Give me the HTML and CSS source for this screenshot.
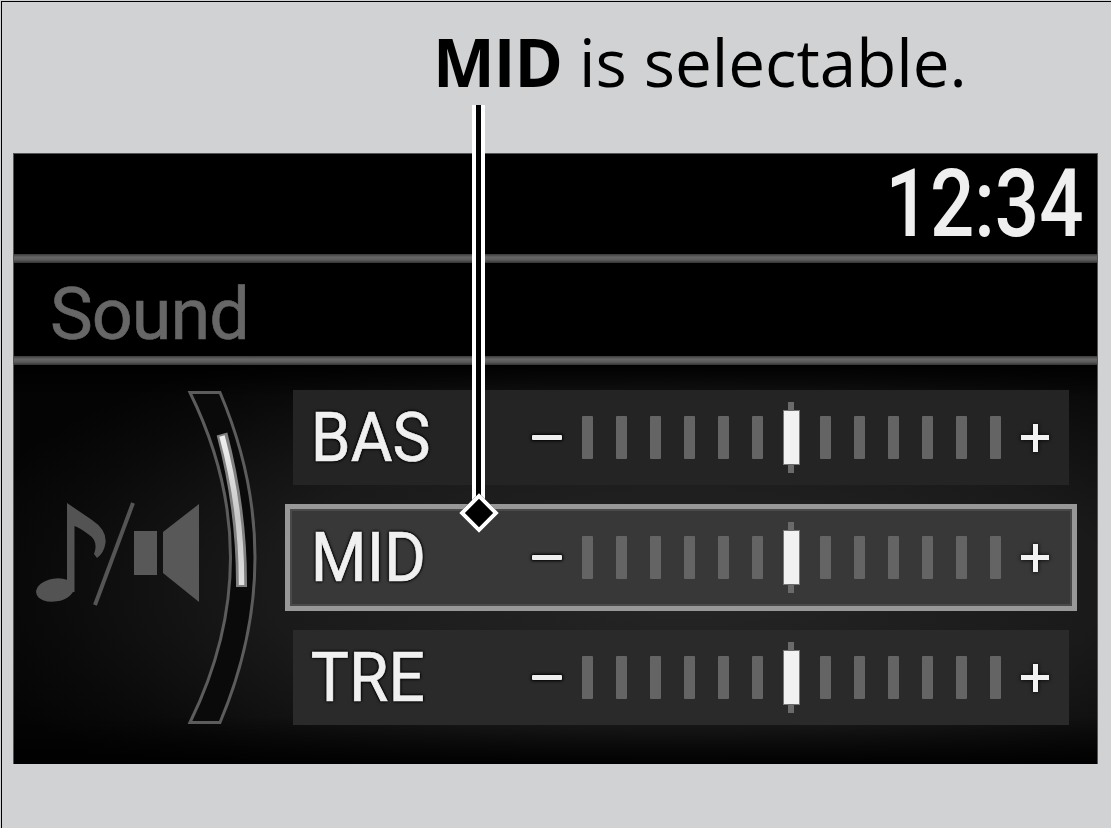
FILE: index.html
```html
<!DOCTYPE html>
<html lang="en">
<head>
<meta charset="utf-8">
<title>MID is selectable</title>
<link rel="stylesheet" href="styles.css">
</head>
<body>
<main class="page">
  <h1 class="title"><b>MID</b> is selectable.</h1>
  <section class="screen">
    <header class="clock-bar"><span class="clock">12:34</span></header>
    <div class="rule"></div>
    <div class="heading-bar"><span class="heading">Sound</span></div>
    <div class="rule"></div>
    <div class="content">
      <svg class="balance" viewBox="14 365 279 399" width="279" height="399" aria-hidden="true">
        <defs>
          <linearGradient id="fade" x1="0" y1="0" x2="0" y2="1">
            <stop offset="0" stop-color="#f0f0f0"/>
            <stop offset="0.55" stop-color="#c8c8c8"/>
            <stop offset="1" stop-color="#e0e0e0"/>
          </linearGradient>
        </defs>
        <ellipse cx="55" cy="590" rx="19" ry="11.5" transform="rotate(-9 55 590)" fill="#535353"/>
        <path d="M67 503 L92 520 Q107 530 105.500 543 Q104 553 97 558 L94 554 Q99 541 88 534 Q80 528 74.500 526 V592 H67 Z" fill="#535353"/>
        <path d="M133 503 L95 605" stroke="#555" stroke-width="4" fill="none"/>
        <rect x="134" y="531" width="23" height="44" fill="#585858"/>
        <path d="M163 532 L199 504 V602 L163 573 Z" fill="#585858"/>
        <path d="M190 392.500 H220 Q290 557.500 220 722.500 H190 Q271 557.500 190 392.500 Z" fill="#0a0a0a" stroke="#5c5c5c" stroke-width="3"/>
        <path d="M222 434 Q242 510 241.500 587" stroke="#808080" stroke-width="11" fill="none"/>
        <path d="M222 436 Q242 510 241.500 585" stroke="url(#fade)" stroke-width="5.500" fill="none"/>
      </svg>
      <div class="rows">
        <div class="row">
          <span class="label">BAS</span>
          <span class="minus"></span>
          <div class="scale">
            <i class="tick"></i><i class="tick"></i><i class="tick"></i><i class="tick"></i><i class="tick"></i><i class="tick"></i>
            <i class="thumb"></i>
            <i class="tick"></i><i class="tick"></i><i class="tick"></i><i class="tick"></i><i class="tick"></i><i class="tick"></i>
          </div>
          <span class="plus"></span>
        </div>
        <div class="row row-selected">
          <span class="label">MID</span>
          <span class="minus"></span>
          <div class="scale">
            <i class="tick"></i><i class="tick"></i><i class="tick"></i><i class="tick"></i><i class="tick"></i><i class="tick"></i>
            <i class="thumb"></i>
            <i class="tick"></i><i class="tick"></i><i class="tick"></i><i class="tick"></i><i class="tick"></i><i class="tick"></i>
          </div>
          <span class="plus"></span>
        </div>
        <div class="row row-last">
          <span class="label">TRE</span>
          <span class="minus"></span>
          <div class="scale">
            <i class="tick"></i><i class="tick"></i><i class="tick"></i><i class="tick"></i><i class="tick"></i><i class="tick"></i>
            <i class="thumb"></i>
            <i class="tick"></i><i class="tick"></i><i class="tick"></i><i class="tick"></i><i class="tick"></i><i class="tick"></i>
          </div>
          <span class="plus"></span>
        </div>
      </div>
    </div>
  </section>
  <div class="leader"></div>
  <div class="leader-tip"></div>
</main>
</body>
</html>
```

FILE: styles.css
```css
* { box-sizing: border-box; }

html, body {
  margin: 0;
  padding: 0;
  height: 100%;
  overflow: hidden;
  background: #d1d2d4;
}

.page {
  position: relative;
  width: 1111px;
  height: 828px;
  padding: 0 0 0 13px;
  background: #d1d2d4;
}

.page::before {
  content: "";
  position: absolute;
  left: 1px;
  top: 1px;
  right: 0;
  bottom: 0;
  border-left: 1px solid #000;
  border-top: 1px solid #000;
  pointer-events: none;
}

.title {
  height: 153px;
  margin: 0;
  padding: 21px 0 0 420px;
  font-family: "Open Sans", sans-serif;
  font-size: 65.500px;
  font-weight: 400;
  line-height: 82px;
  color: #000;
  white-space: nowrap;
}

.title b { font-weight: 700; letter-spacing: -1px; }

.screen {
  width: 1085px;
  height: 611px;
  display: flex;
  flex-direction: column;
  background: #000;
  border: solid #555;
  border-width: 1px 1px 0 1px;
  font-family: Roboto, sans-serif;
}

.clock-bar {
  height: 100px;
  display: flex;
  justify-content: flex-end;
  padding-right: 14px;
}

.clock {
  font-family: Roboto, sans-serif;
  font-weight: 500;
  font-size: 94px;
  line-height: 100px;
  color: #efefef;
  transform: scaleX(0.83);
  transform-origin: right center;
}

.rule {
  height: 9px;
  flex: none;
  background: linear-gradient(#3a3a3a, #666 35%, #5c5c5c 65%, #333);
}

.heading-bar {
  height: 93px;
  padding-left: 36px;
  display: flex;
  align-items: center;
}

.heading {
  font-size: 72px;
  letter-spacing: -1px;
  line-height: 93px;
  color: #676767;
  -webkit-text-stroke: 0.6px #676767;
  margin-top: 10px;
}

.content {
  flex: 1;
  display: flex;
  background:
    linear-gradient(rgba(0,0,0,0.9), rgba(0,0,0,0) 8%, rgba(0,0,0,0) 88%, rgba(0,0,0,0.95)),
    radial-gradient(ellipse 70% 70% at 62% 55%, #262626 0%, #1a1a1a 55%, #0a0a0a 85%, #040404 100%);
}

.balance {
  flex: none;
  display: block;
}

.rows {
  flex: none;
  width: 776px;
  padding-top: 25px;
  display: flex;
  flex-direction: column;
  gap: 25px;
}

.row {
  position: relative;
  z-index: 0;
  height: 95px;
  display: flex;
  align-items: center;
  background: #242424;
}

.row-selected { background: transparent; }

.row-selected::before {
  content: "";
  position: absolute;
  z-index: -1;
  inset: -6px -8px;
  background: #383838;
  border: 5px solid #989898;
  box-shadow: inset 0 0 0 2px #4a4a4a;
}

.row-last { background: #2a2a2a; }

.label {
  flex: none;
  width: 238px;
  padding: 2px 0 0 19px;
  font-family: Roboto, sans-serif;
  font-size: 68px;
  line-height: 95px;
  color: #f0f0f0;
  -webkit-text-stroke: 0.7px #f0f0f0;
  text-shadow: 0 0 2px #000, 0 0 3px #000, 0 0 3px #000, 0 0 4px #000;
  transform: scaleX(0.94);
  transform-origin: left center;
}

.minus {
  flex: none;
  width: 30px;
  height: 5px;
  margin-left: 1px;
  border-radius: 1px;
  background: #eee;
  box-shadow: 0 0 3px 1px #000;
}

.scale {
  flex: none;
  width: 442px;
  height: 72px;
  margin: 0 9px 0 8px;
  display: grid;
  grid-template-columns: repeat(13, 34px);
  justify-items: center;
  align-items: center;
}

.tick {
  display: block;
  width: 11px;
  height: 43px;
  border-radius: 1px;
  background: #646464;
}

.thumb {
  position: relative;
  display: block;
  width: 15px;
  height: 53px;
  background: #f2f2f2;
  box-shadow: 0 0 0 1px #777;
}

.thumb::before {
  content: "";
  position: absolute;
  z-index: 0;
  left: 4px;
  top: -9px;
  width: 6px;
  height: 71px;
  background: linear-gradient(#6a6a6a 12%, transparent 12%, transparent 88%, #6a6a6a 88%);
}

.plus {
  position: relative;
  flex: none;
  width: 28px;
  height: 28px;
  filter: drop-shadow(0 0 2px #000);
}

.plus::before,
.plus::after {
  content: "";
  position: absolute;
  background: #f2f2f2;
}

.plus::before { left: 0; top: 11.500px; width: 28px; height: 5px; }
.plus::after { left: 11.500px; top: 0; width: 5px; height: 28px; }

.leader {
  position: absolute;
  left: 472px;
  top: 105px;
  width: 13px;
  height: 400px;
  background: #000;
  border: solid #fff;
  border-width: 0 4px;
}

.leader-tip {
  position: absolute;
  left: 464.500px;
  top: 499px;
  width: 28px;
  height: 28px;
  background: #000;
  border: 4px solid #fff;
  transform: rotate(45deg);
}
```
